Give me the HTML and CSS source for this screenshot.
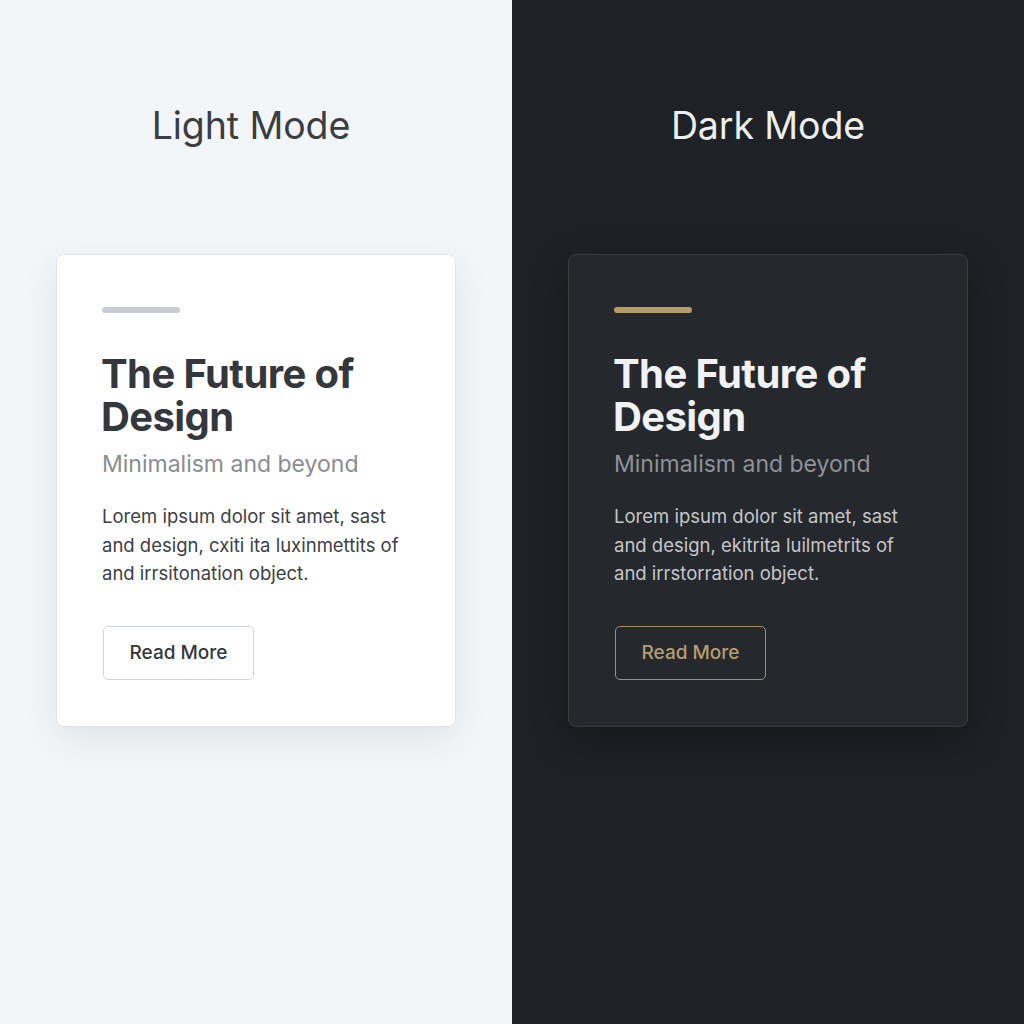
FILE: index.html
```html
<!DOCTYPE html>
<html lang="en">
<head>
<meta charset="utf-8">
<title>Light Mode / Dark Mode</title>
<link rel="stylesheet" href="styles.css">
</head>
<body>
<main class="split">
  <section class="panel panel-light">
    <h2 class="mode-title">Light Mode</h2>
    <article class="card">
      <div class="accent"></div>
      <h1 class="card-title">The Future of Design</h1>
      <p class="card-sub">Minimalism and beyond</p>
      <p class="card-body">Lorem ipsum dolor sit amet, sast and design, cxiti ita luxinmettits of and irrsitonation object.</p>
      <button class="btn">Read More</button>
    </article>
  </section>
  <section class="panel panel-dark">
    <h2 class="mode-title">Dark Mode</h2>
    <article class="card">
      <div class="accent"></div>
      <h1 class="card-title">The Future of Design</h1>
      <p class="card-sub">Minimalism and beyond</p>
      <p class="card-body">Lorem ipsum dolor sit amet, sast and design, ekitrita luilmetrits of and irrstorration object.</p>
      <button class="btn">Read More</button>
    </article>
  </section>
</main>
</body>
</html>
```
FILE: styles.css
```css
* { box-sizing: border-box; }
html, body { margin: 0; padding: 0; }
body {
  font-family: Inter, "Noto Sans", "Liberation Sans", sans-serif;
  width: 1024px;
  height: 1024px;
  overflow: hidden;
}
.split {
  display: grid;
  grid-template-columns: 512px 512px;
  height: 1024px;
}
.panel {
  display: flex;
  flex-direction: column;
  align-items: center;
  padding-top: 104px;
}
.panel-light { background: #f3f6f8; }
.panel-dark { background: #1e2125; }

.mode-title {
  margin: 0;
  font-size: 37.5px;
  line-height: 44px;
  font-weight: 400;
  letter-spacing: -0.1px;
}
.panel-light .mode-title { color: #3a3d42; margin-right: 10px; }
.panel-dark .mode-title { color: #eceef0; }

.card {
  margin-top: 106px;
  width: 400px;
  height: 473px;
  border-radius: 8px;
  padding: 52px 44px 0;
  display: flex;
  flex-direction: column;
  align-items: flex-start;
}
.panel-light .card {
  background: #ffffff;
  border: 1px solid #e1e4e7;
  box-shadow: 0 12px 36px rgba(40, 50, 60, 0.09);
}
.panel-dark .card {
  background: #25282d;
  border: 1px solid #3a3d42;
  box-shadow: 0 12px 36px rgba(0, 0, 0, 0.25);
}

.accent {
  width: 78px;
  height: 6px;
  border-radius: 3px;
  margin-left: 1px;
}
.panel-light .accent { background: #c9ccd0; }
.panel-dark .accent { background: #b49c6b; }

.card-title {
  margin: 39px 0 0;
  font-size: 40px;
  line-height: 43px;
  font-weight: 700;
  letter-spacing: -0.6px;
}
.panel-light .card-title { color: #34373c; }
.panel-dark .card-title { color: #f1f2f4; }

.card-sub {
  margin: 11px 0 0 1px;
  font-size: 23px;
  line-height: 30px;
  font-weight: 400;
}
.panel-light .card-sub { color: #8a8d92; }
.panel-dark .card-sub { color: #8f9297; }

.card-body {
  margin: 23px 0 0 1px;
  font-size: 18.5px;
  line-height: 28.5px;
  width: 310px;
}
.panel-light .card-body { color: #3d4045; }
.panel-dark .card-body { color: #c4c6c9; }

.btn {
  margin-top: 38px;
  margin-left: 2px;
  width: 151px;
  height: 54px;
  border-radius: 5px;
  background: transparent;
  font-family: inherit;
  font-size: 19px;
  font-weight: 500;
  cursor: pointer;
}
.panel-light .btn { border: 1px solid #d2d5d8; color: #34373c; }
.panel-dark .btn { border: 1px solid #a68f62; color: #b59e70; }
```
